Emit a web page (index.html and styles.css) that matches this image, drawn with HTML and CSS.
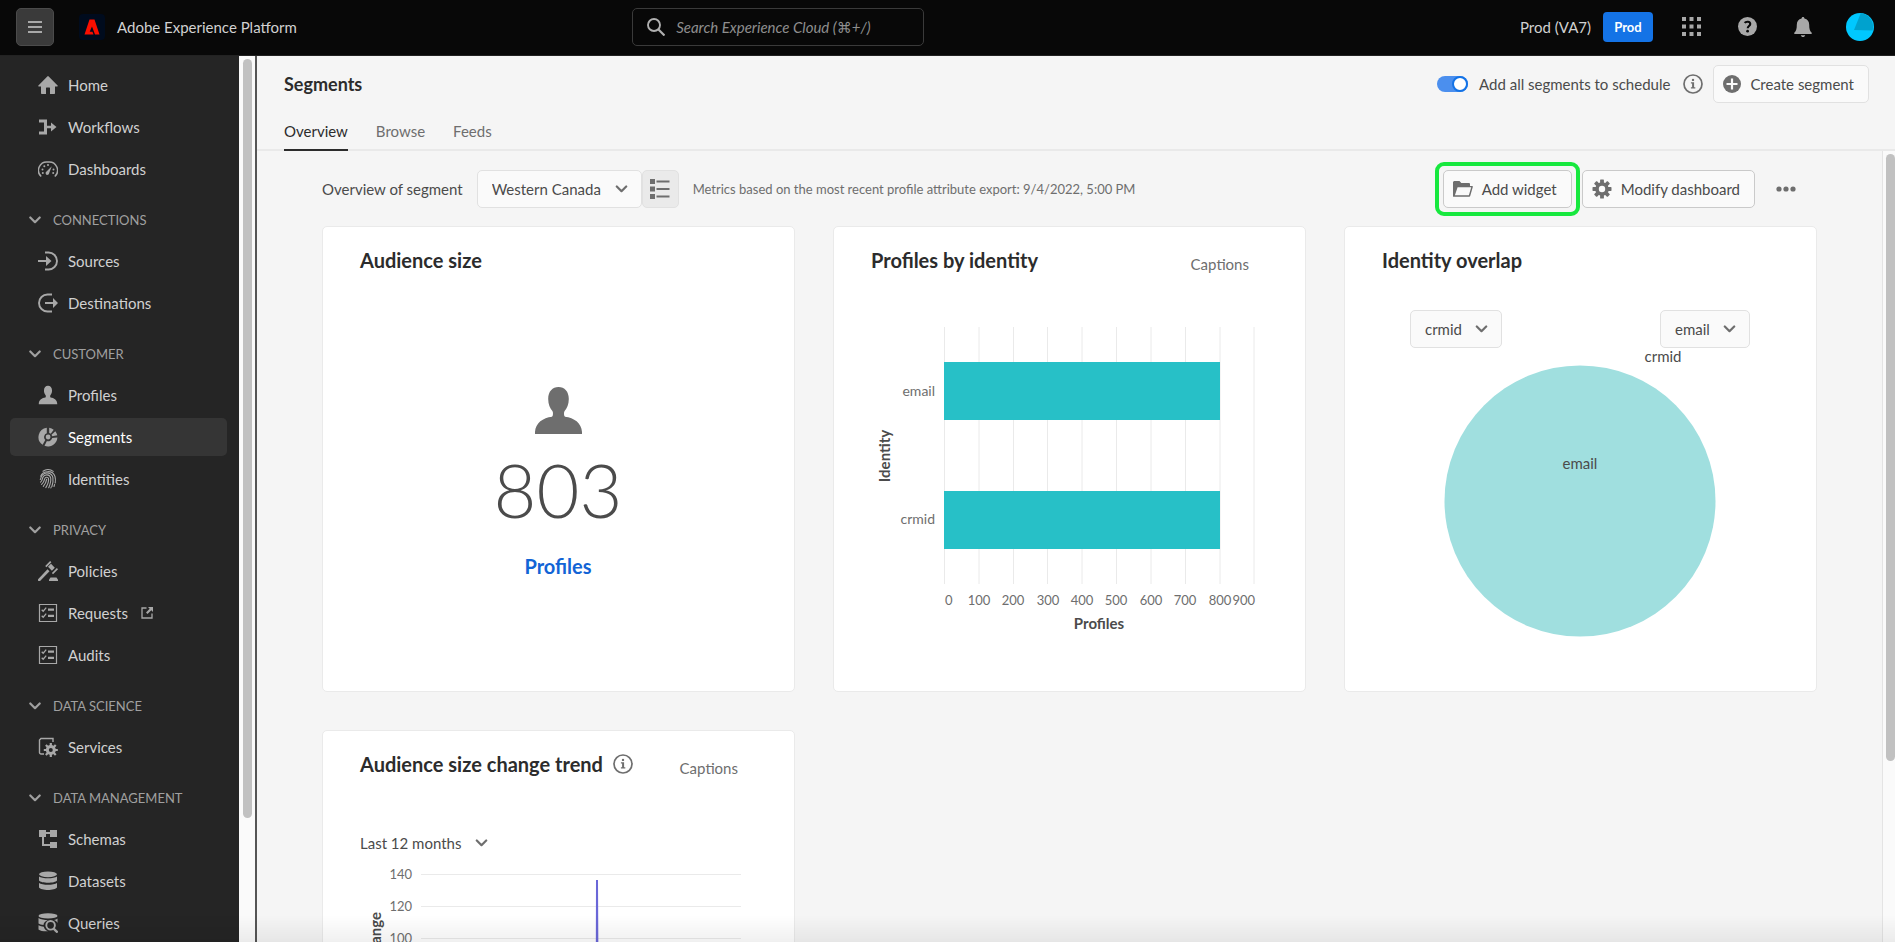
FILE: index.html
```html
<!DOCTYPE html>
<html lang="en">
<head>
<meta charset="utf-8">
<title>Segments - Adobe Experience Platform</title>
<meta name="viewport" content="width=device-width, initial-scale=1">
<link rel="stylesheet" href="styles.css">
</head>
<body>
<svg class="sprite" aria-hidden="true">
  <symbol id="i-chevron" viewBox="0 0 12 8"><path d="M1.300 1.500 6 6.200l4.700-4.700" fill="none" stroke="currentColor" stroke-width="2.200" stroke-linecap="round" stroke-linejoin="round"/></symbol>
  <symbol id="i-home" viewBox="0 0 20 18"><path d="M19.600 9.500 10.700.4a1 1 0 0 0-1.400 0L.4 9.500c-.4.4-.2.900.3.900H3v6.900c0 .4.300.7.700.7H8v-6c0-.3.2-.5.500-.5h3c.3 0 .5.200.5.500v6h4.300c.4 0 .7-.3.700-.7v-6.900h2.300c.5 0 .7-.5.300-.9z"/></symbol>
  <symbol id="i-flow" viewBox="0 0 20 18"><path d="M1 1.500h8v6.300h4V4.600L18.500 9 13 13.400v-3.200H9v6.300H1v-3h5v-9H1z"/></symbol>
  <symbol id="i-gauge" viewBox="0 0 20 18"><path d="M3.200 16.500A8.400 8.400 0 0 1 10 2a8.400 8.400 0 0 1 6.800 14.500" fill="none" stroke="currentColor" stroke-width="1.500"/><path d="M13.800 6.300 11.200 13a1.800 1.800 0 1 1-2.700-1.500z"/><circle cx="10" cy="4.900" r="1"/><circle cx="6.300" cy="6.300" r="1"/><circle cx="4.500" cy="9.600" r="1"/><circle cx="15.500" cy="9.600" r="1"/><circle cx="4.800" cy="13" r="1"/><circle cx="15.200" cy="13" r="1"/></symbol>
  <symbol id="i-source" viewBox="0 0 20 20"><path d="M7 1.500h3.500a8.500 8.500 0 0 1 0 17H7" fill="none" stroke="currentColor" stroke-width="1.900"/><path d="M0 9h8V5l5.500 5L8 15v-4H0z"/></symbol>
  <symbol id="i-dest" viewBox="0 0 20 20"><path d="M14 1.500H9.500a8.500 8.500 0 0 0 0 17H14" fill="none" stroke="currentColor" stroke-width="1.900"/><path d="M7 9h8V5l5 5-5 5v-4H7z"/></symbol>
  <symbol id="i-user" viewBox="-2 -2 51 51"><path d="M23.500 0c6 0 10.300 4.400 10.300 12 0 5.500-1.800 9.200-4.200 12-.9 1.200-.8 4.800.4 5.800C39 30.800 46.500 36 47 45v2H0v-2c.5-9 8-14.200 17-15.200 1.200-1 1.300-4.600.4-5.800-2.400-2.800-4.200-6.500-4.200-12C13.200 4.400 17.500 0 23.500 0z"/></symbol>
  <symbol id="i-segments" viewBox="0 0 20 20"><path d="M8.800.7v5.500A4.100 4.100 0 0 0 7.300 13L4.600 17.800A9.400 9.400 0 0 1 8.800.7zM11.200.7a9.400 9.400 0 0 1 4.500 2l-3 4a4.200 4.200 0 0 0-1.500-.6zM17.300 4.300a9.400 9.400 0 0 1 2 4l-5.100.9a4 4 0 0 0-.7-1.500zM19.400 10.600A9.400 9.400 0 0 1 6.500 18.800l2.400-4.800a4.200 4.200 0 0 0 5.300-3z"/><circle cx="10.100" cy="10" r="2.400"/></symbol>
  <symbol id="i-finger" viewBox="0 0 20 20"><g fill="none" stroke="currentColor" stroke-width="1.100" stroke-linecap="round"><path d="M5 2.200a9 9 0 0 1 10.200.2"/><path d="M2.700 7.300C4.800 1.400 14.800.8 17 7.500c.6 2 .5 4.500.2 6.500"/><path d="M2.300 10.500c.6-1 .7-3 2-4.300C8 2 14 4 14.900 8.600c.5 3-.1 6-1 8.900"/><path d="M2.500 13.200c1.700-1.400 1.800-3.400 2.400-4.900 1.500-3.600 7-3.200 7.800.8.500 3.200-.6 6.500-2 9.700"/><path d="M3.600 15.400c2.300-2 2.800-4 3.300-6 .5-1.700 3.200-1.600 3.600.3.500 3-1.100 6.300-2.700 8.900"/><path d="M5.300 17.400c2-2.300 3-4.500 3.400-7.200"/><path d="M12.900 18.900l.4-1M16 17.500l.6-2"/></g></symbol>
  <symbol id="i-gavel" viewBox="0 0 20 20"><path d="M.3 18 9.500 8.300l2 2L2.300 19.800a1.300 1.300 0 0 1-2-1.800zM10 5.700l3-2.900 3.800 4-2.900 2.900zM7.200 5l4.900-4.900 1.300 1.100-5 5zM13.900 12l5-4.900 1.100 1.200-5 5zM12.500 16.500h6l1.500 2.300V20h-9v-1.200z"/></symbol>
  <symbol id="i-list" viewBox="0 0 20 20"><path d="M1.500 1.500h17v17h-17z" fill="none" stroke="currentColor" stroke-width="1.200"/><path d="m3.700 6.700 1.500 1.500 3-3.500M3.700 12.700l1.500 1.500 3-3.500" fill="none" stroke="currentColor" stroke-width="1.300"/><path d="M10 5.500h6v2.200h-6zM10 11.700h6v2.200h-6z"/></symbol>
  <symbol id="i-external" viewBox="0 0 12 12"><path d="M5.500 1H1v10h10V6.500" fill="none" stroke="currentColor" stroke-width="1.300"/><path d="M7 0h5v5l-1.700-1.700L6.500 7 5 5.500l3.700-3.800z"/></symbol>
  <symbol id="i-gear" viewBox="-10 -10 20 20"><g><rect x="-1.900" y="-9.500" width="3.800" height="19" rx=".6"/><rect x="-1.900" y="-9.500" width="3.800" height="19" rx=".6" transform="rotate(45)"/><rect x="-1.900" y="-9.500" width="3.800" height="19" rx=".6" transform="rotate(90)"/><rect x="-1.900" y="-9.500" width="3.800" height="19" rx=".6" transform="rotate(135)"/></g><circle r="6.800"/><circle class="gear-hole" r="3.200"/></symbol>
  <symbol id="i-service" viewBox="0 0 20 20"><path d="M6 17H3a1.500 1.500 0 0 1-1.500-1.500V3L3 1.500h12V5" fill="none" stroke="currentColor" stroke-width="1.400"/><g transform="translate(12.800 13)"><path d="M-1.100-7h2.200V7h-2.200zM-7-1.100H7v2.200H-7z"/><path d="M-1.100-7h2.200V7h-2.200zM-7-1.100H7v2.200H-7z" transform="rotate(45)"/><circle r="5"/><circle class="gear-hole" r="2"/></g></symbol>
  <symbol id="i-schema" viewBox="0 0 20 20"><path d="M1 1h7v2h4V1h7v7h-7V5H8v3H6v7h6v-2h7v6h-7v-2H4V8H1z"/></symbol>
  <symbol id="i-data" viewBox="0 0 20 20"><ellipse cx="10" cy="3.300" rx="9" ry="2.900"/><path d="M1 5.500c3 2.400 15 2.400 18 0v4c-2 3-16 3-18 0zM1 12c3 2.400 15 2.400 18 0v4.500c-2 3.300-16 3.300-18 0z"/></symbol>
  <symbol id="i-query" viewBox="0 0 20 20"><ellipse cx="10" cy="2.900" rx="9.500" ry="2.600"/><path d="M.5 5c2 1.500 6 2 9.500 2-3 1-4.500 3-4.500 5-2-.2-4-.7-5-1.500zM16 7c1.500-.4 2.700-.9 3.500-1.600V10c-.6-1.500-1.700-2.400-3.500-3zM.5 12.300c1.500.9 3.500 1.300 5.300 1.400.5 2 2 3.800 4.200 4.600-4 .2-8-.4-9.500-1.800z"/><circle cx="12.600" cy="12.300" r="4.300" fill="none" stroke="currentColor" stroke-width="1.900"/><path d="m15.600 15.600 4 4" stroke="currentColor" stroke-width="2.300"/></symbol>
  <symbol id="i-info" viewBox="0 0 20 20"><circle cx="10" cy="10" r="9" fill="none" stroke="currentColor" stroke-width="1.700"/><circle cx="10" cy="5.900" r="1.200"/><path d="M7.900 8.300h3.200v4.900h1.200v1.300H7.900v-1.300h1.200V9.600H7.900z"/></symbol>
</svg>

<header class="topbar">
  <button class="menu-btn" aria-label="Menu"><svg viewBox="0 0 14 14" width="14" height="14"><path d="M0 2h14M0 7h14M0 12h14" stroke="currentColor" stroke-width="2"/></svg></button>
  <a class="brand" href="#">
    <svg class="logo" viewBox="0 0 26 26" aria-hidden="true"><rect width="26" height="26" rx="4" fill="#000b1d"/><path d="M10.500 5.500h5L20.500 20.500H16l-3-8-2.300 5.300h2.800l1 2.700H5.500z" fill="#fa0f00"/></svg>
    <span>Adobe Experience Platform</span>
  </a>
  <label class="search">
    <svg viewBox="0 0 18 18" width="18" height="18" aria-hidden="true"><circle cx="7" cy="7" r="6" fill="none" stroke="currentColor" stroke-width="1.900"/><path d="m11.500 11.500 6 6" stroke="currentColor" stroke-width="2.200"/></svg>
    <input type="search" placeholder="Search Experience Cloud (⌘+/)" aria-label="Search Experience Cloud">
  </label>
  <div class="top-actions">
    <span class="org">Prod (VA7)</span>
    <button class="env">Prod</button>
    <button class="top-icon" aria-label="Apps"><svg viewBox="0 0 19 19" width="19" height="19"><path d="M0 0h4v4H0zM7.500 0h4v4h-4zM15 0h4v4h-4zM0 7.500h4v4H0zM7.500 7.500h4v4h-4zM15 7.500h4v4h-4zM0 15h4v4H0zM7.500 15h4v4h-4zM15 15h4v4h-4z"/></svg></button>
    <button class="top-icon" aria-label="Help"><svg viewBox="0 0 18 18" width="19" height="19"><circle cx="9" cy="9" r="9"/><path d="M6.300 5.600C7.500 4 11.600 3.900 11.600 6.600c0 1.900-2.400 2-2.400 4" fill="none" stroke="#080808" stroke-width="2"/><circle cx="9.100" cy="13.400" r="1.300" fill="#080808"/></svg></button>
    <button class="top-icon" aria-label="Notifications"><svg viewBox="0 0 18 20" width="18" height="20"><path d="M9 0c.9 0 1.400.6 1.400 1.500 3.200.7 4.800 3 4.800 6.200 0 4.200.6 6.200 2.300 7.800.8.700.4 1.500-.5 1.500H1c-.9 0-1.300-.8-.5-1.500 1.700-1.600 2.300-3.600 2.300-7.800 0-3.200 1.600-5.500 4.800-6.200C7.600.6 8.100 0 9 0zM6.800 18.200h4.400c-.4 2.400-4 2.400-4.400 0z"/></svg></button>
    <button class="avatar" aria-label="Account"><svg viewBox="0 0 28 28" width="28" height="28"><circle cx="14" cy="14" r="14" fill="#00c8ff"/><path d="M14.800 0A14 14 0 0 1 26.600 17.500L8 17z" fill="#00a2ce"/></svg></button>
  </div>
</header>

<div class="shell">
  <nav class="sidebar" aria-label="Main">
    <a class="item" href="#"><svg><use href="#i-home"/></svg>Home</a>
    <a class="item" href="#"><svg><use href="#i-flow"/></svg>Workflows</a>
    <a class="item" href="#"><svg><use href="#i-gauge"/></svg>Dashboards</a>
    <button class="group"><svg><use href="#i-chevron"/></svg>CONNECTIONS</button>
    <a class="item" href="#"><svg><use href="#i-source"/></svg>Sources</a>
    <a class="item" href="#"><svg><use href="#i-dest"/></svg>Destinations</a>
    <button class="group"><svg><use href="#i-chevron"/></svg>CUSTOMER</button>
    <a class="item" href="#"><svg><use href="#i-user"/></svg>Profiles</a>
    <a class="item current" href="#" aria-current="page"><svg><use href="#i-segments"/></svg>Segments</a>
    <a class="item" href="#"><svg><use href="#i-finger"/></svg>Identities</a>
    <button class="group"><svg><use href="#i-chevron"/></svg>PRIVACY</button>
    <a class="item" href="#"><svg><use href="#i-gavel"/></svg>Policies</a>
    <a class="item" href="#"><svg><use href="#i-list"/></svg>Requests<svg class="external"><use href="#i-external"/></svg></a>
    <a class="item" href="#"><svg><use href="#i-list"/></svg>Audits</a>
    <button class="group"><svg><use href="#i-chevron"/></svg>DATA SCIENCE</button>
    <a class="item" href="#"><svg><use href="#i-service"/></svg>Services</a>
    <button class="group"><svg><use href="#i-chevron"/></svg>DATA MANAGEMENT</button>
    <a class="item" href="#"><svg><use href="#i-schema"/></svg>Schemas</a>
    <a class="item" href="#"><svg><use href="#i-data"/></svg>Datasets</a>
    <a class="item" href="#"><svg><use href="#i-query"/></svg>Queries</a>
  </nav>
  <div class="track side-track"><div class="thumb"></div></div>

  <main class="main">
    <div class="page-head">
      <div class="title-row">
        <h1>Segments</h1>
        <label class="switch"><input type="checkbox" role="switch" checked>Add all segments to schedule</label>
        <svg class="info"><use href="#i-info"/></svg>
        <button class="btn create"><svg viewBox="0 0 18 18" width="18" height="18"><circle cx="9" cy="9" r="9"/><path d="M9 3.500v11M3.500 9h11" stroke="#fafafa" stroke-width="2.200"/></svg>Create segment</button>
      </div>
      <div class="tabs" role="tablist">
        <button class="tab active" role="tab" aria-selected="true">Overview</button>
        <button class="tab" role="tab">Browse</button>
        <button class="tab" role="tab">Feeds</button>
      </div>
    </div>

    <div class="body">
      <div class="content">
        <div class="toolbar">
          <label for="segment">Overview of segment</label>
          <span class="picker"><select id="segment"><option>Western Canada</option></select><svg><use href="#i-chevron"/></svg></span>
          <button class="list-btn" aria-label="Choose segment"><svg viewBox="0 0 20 20" width="20" height="20"><path d="M0 0h5v5H0zM0 7.500h5v5H0zM0 15h5v5H0zM6.500 1.500h13v2h-13zM6.500 9h13v2h-13zM6.500 16.500h13v2h-13z"/></svg></button>
          <span class="note">Metrics based on the most recent profile attribute export: 9/4/2022, 5:00 PM</span>
          <button class="btn strong marked"><svg viewBox="0 0 20 16" width="20" height="16"><path d="M0 15.200V1l1-1h5.500L8.300 2H16q1 0 1 1v2h2.200q.9 0 .6.900L17.200 15q-.2.700-1 .7H.5q-.5 0-.5-.5zM4.600 6.300 1.900 14.300h14L18.200 6.300z" fill-rule="evenodd"/></svg>Add widget</button>
          <button class="btn strong"><svg class="gear"><use href="#i-gear"/></svg>Modify dashboard</button>
          <button class="more" aria-label="More"><svg viewBox="0 0 20 6" width="20" height="6"><circle cx="3" cy="3" r="2.600"/><circle cx="10" cy="3" r="2.600"/><circle cx="17" cy="3" r="2.600"/></svg></button>
        </div>

        <div class="cards">
          <section class="card">
            <div class="card-head"><h2>Audience size</h2></div>
            <div class="metric">
              <svg class="person"><use href="#i-user"/></svg>
              <span class="number">803</span>
              <a href="#">Profiles</a>
            </div>
          </section>

          <section class="card">
            <div class="card-head"><h2>Profiles by identity</h2><button class="captions">Captions</button></div>
            <svg class="bars" viewBox="0 0 395 320" role="img" aria-label="Profiles by identity">
              <path class="grid" d="M73.500 0v257M108 0v257M142.500 0v257M176.500 0v257M211 0v257M245.500 0v257M280 0v257M314.500 0v257M349 0v257M383 0v257"/>
              <path fill="#27c0c7" d="M73 35h276v58H73zM73 164h276v58H73z"/>
              <g class="label" text-anchor="end"><text x="64" y="69">email</text><text x="64" y="197">crmid</text></g>
              <g class="tick">
                <text x="74" y="278">0</text>
                <g text-anchor="middle"><text x="108" y="278">100</text><text x="142" y="278">200</text><text x="177" y="278">300</text><text x="211" y="278">400</text><text x="245" y="278">500</text><text x="280" y="278">600</text><text x="314" y="278">700</text><text x="349" y="278">800</text></g>
                <text x="384" y="278" text-anchor="end">900</text>
              </g>
              <g class="axis" text-anchor="middle"><text x="228" y="302">Profiles</text><text transform="translate(19 129) rotate(-90)">Identity</text></g>
            </svg>
          </section>

          <section class="card">
            <div class="card-head"><h2>Identity overlap</h2></div>
            <div class="overlap-pickers">
              <span class="picker"><select aria-label="First identity"><option>crmid</option></select><svg><use href="#i-chevron"/></svg></span>
              <span class="picker"><select aria-label="Second identity"><option>email</option></select><svg><use href="#i-chevron"/></svg></span>
            </div>
            <svg class="venn" viewBox="0 0 272 290" role="img" aria-label="Identity overlap">
              <circle cx="136" cy="153" r="135.500" fill="#a0dfdf"/>
              <g class="venn-label" text-anchor="middle"><text x="219" y="14">crmid</text><text x="136" y="121">email</text></g>
            </svg>
          </section>

          <section class="card">
            <div class="card-head"><h2>Audience size change trend</h2><svg class="info"><use href="#i-info"/></svg><button class="captions">Captions</button></div>
            <div class="range"><span class="picker quiet"><select aria-label="Range"><option>Last 12 months</option></select><svg><use href="#i-chevron"/></svg></span></div>
            <svg class="trend" viewBox="0 0 395 260" role="img" aria-label="Audience size change trend">
              <path class="grid" d="M61 9.500h320M61 41.500h320M61 73.500h320M61 105.500h320M61 137.500h320M61 169.500h320M61 201.500h320"/>
              <path d="M236.500 201 237 15l1 186z" fill="none" stroke="#6a67d8" stroke-width="2" stroke-linejoin="bevel"/>
              <g class="tick" text-anchor="end"><text x="52" y="14">140</text><text x="52" y="46">120</text><text x="52" y="78">100</text><text x="52" y="110">80</text></g>
              <g class="axis" text-anchor="end"><text transform="translate(21 47) rotate(-90)">Change</text></g>
            </svg>
          </section>
        </div>
      </div>
      <div class="track body-track"><div class="thumb"></div></div>
    </div>
  </main>
</div>
<div class="fade"></div>
</body>
</html>
```
FILE: styles.css
```css
*, *::after { box-sizing: border-box; }

body {
  margin: 0;
  height: 100vh;
  display: flex;
  flex-direction: column;
  overflow: hidden;
  font: 15px/20px Lato, "Noto Sans", "DejaVu Sans", sans-serif;
  color: #4b4b4b;
  background: #f5f5f5;
  --hole: #252525;
}

svg { fill: currentColor; flex: none; display: block; }
button, input, select { font: inherit; color: inherit; margin: 0; }
button { border: 0; background: none; padding: 0; cursor: pointer; }
a { color: inherit; text-decoration: none; }
h1, h2 { margin: 0; color: #2c2c2c; font-weight: 700; }
.sprite { position: absolute; width: 0; height: 0; }

/* Top bar */
.topbar {
  display: grid;
  grid-template-columns: 38px 14fr 292px 23fr;
  align-items: center;
  height: 56px;
  padding: 0 21px 2px 16px;
  flex: none;
  background: #080808;
  border-bottom: 1px solid #222;
  color: #d1d1d1;
}
.menu-btn {
  width: 38px;
  height: 38px;
  display: grid;
  place-items: center;
  border: 1px solid #4b4b4b;
  border-radius: 5px;
  background: #3a3a3a;
  color: #a8a8a8;
}
.brand { display: flex; align-items: center; gap: 12px; margin-left: 25px; }
.logo { width: 26px; height: 26px; }
.search {
  display: flex;
  align-items: center;
  gap: 11px;
  height: 38px;
  padding: 0 14px;
  border: 1px solid #3a3a3a;
  border-radius: 5px;
  color: #b0b0b0;
}
.search input {
  flex: 1;
  min-width: 0;
  border: 0;
  padding: 0;
  background: none;
  outline: 0;
  font-style: italic;
}
.search input::placeholder { color: #8e8e8e; opacity: 1; }
.top-actions { display: flex; align-items: center; justify-content: flex-end; color: #a8a8a8; }
.org { color: #d1d1d1; margin-right: 12px; }
.env {
  width: 50px;
  height: 30px;
  margin-right: 19px;
  border-radius: 4px;
  background: #1473e6;
  color: #fff;
  font-size: 13px;
  font-weight: 700;
}
.top-icon { width: 38px; height: 38px; display: grid; place-items: center; margin-right: 18px; }
.avatar { margin-left: 6px; }

/* Shell and sidebar */
.shell { flex: 1; min-height: 0; display: flex; }
.sidebar {
  width: 239px;
  flex: none;
  padding: 10px 12px 0 10px;
  overflow: hidden;
  background: #252525;
  color: #d1d1d1;
}
.item {
  display: flex;
  align-items: center;
  height: 38px;
  margin-bottom: 4px;
  padding-left: 28px;
  gap: 10px;
  border-radius: 5px;
}
.item svg { width: 20px; height: 20px; color: #a8a8a8; }
.item .external { width: 12px; height: 12px; margin-left: 3px; }
.item.current { background: #353535; color: #fff; }
.gear-hole { fill: var(--hole); }
.group {
  display: flex;
  align-items: center;
  gap: 12px;
  width: 100%;
  height: 50px;
  padding: 5px 0 0 19px;
  color: #a0a0a0;
  font-size: 13px;
}
.group svg { width: 12px; height: 8px; }

.track { flex: none; background: #fafafa; }
.thumb { border-radius: 5px; background: #c1c1c1; }
.side-track { width: 16px; padding: 3px 3px 0 4px; }
.side-track .thumb { height: 86%; }

/* Page header */
.main {
  flex: 1;
  min-width: 0;
  display: flex;
  flex-direction: column;
  border-left: 2px solid #555;
}
.page-head { padding: 9px 26px 0 27px; border-bottom: 2px solid #e9e9e9; }
.title-row { display: flex; align-items: center; height: 38px; }
.title-row h1 { flex: 1; font-size: 18px; line-height: 20px; }
.switch { display: flex; align-items: center; gap: 11px; }
.switch input {
  appearance: none;
  display: block;
  width: 31px;
  height: 16px;
  border-radius: 8px;
  background: #4b8fee;
}
.switch input::after {
  content: "";
  display: block;
  width: 16px;
  height: 16px;
  margin-left: 15px;
  border: 2px solid #1473e6;
  border-radius: 50%;
  background: #fff;
}
.info { width: 20px; height: 20px; color: #6e6e6e; }
.title-row .info { margin: 0 10px 0 13px; }
.btn {
  display: flex;
  align-items: center;
  gap: 9px;
  height: 38px;
  padding: 0 14px 0 9px;
  border: 1px solid #e1e1e1;
  border-radius: 5px;
  background: #fafafa;
  --hole: #fafafa;
}
.btn svg { color: #6e6e6e; }
.btn.strong { border-color: #cacaca; }
.tabs { display: flex; gap: 28px; margin: 6px 0 -2px; height: 42px; }
.tab { padding-top: 4px; color: #6e6e6e; border-bottom: 2px solid transparent; }
.tab.active { color: #2c2c2c; border-color: #2c2c2c; }

/* Content */
.body { flex: 1; min-height: 0; display: flex; }
.content { flex: 1; min-width: 0; padding: 19px 65px 0; overflow: hidden; }
.body-track { width: 13px; padding: 3px 0 0 3px; border-left: 1px solid #e4e4e4; }
.body-track .thumb { height: 77%; }
.toolbar { display: flex; align-items: center; padding-right: 12px; margin-bottom: 18px; }
.picker { position: relative; display: inline-flex; align-items: center; }
.picker select {
  appearance: none;
  height: 38px;
  padding: 0 39px 0 14px;
  border: 1px solid #e1e1e1;
  border-radius: 5px;
  background: #fafafa;
}
.picker svg { position: absolute; right: 14px; width: 13px; height: 8px; color: #6e6e6e; pointer-events: none; }
.toolbar .picker { margin-left: 14px; }
.list-btn {
  width: 37px;
  height: 38px;
  margin-right: 14px;
  display: grid;
  place-items: center;
  border: 1px solid #e1e1e1;
  border-radius: 5px;
  background: #eaeaea;
  color: #6e6e6e;
}
.note { flex: 1; color: #6e6e6e; font-size: 13px; }
.marked { position: relative; margin-right: 10px; }
.marked::after {
  content: "";
  position: absolute;
  inset: -9px;
  border: 4px solid #17e83e;
  border-radius: 9px;
}
.gear { width: 20px; height: 20px; }
.more { width: 38px; height: 38px; margin-left: 12px; display: grid; place-items: center; color: #6e6e6e; }

.cards {
  display: grid;
  grid-template-columns: repeat(3, minmax(0, 1fr));
  grid-auto-rows: 466px;
  gap: 38px;
}
.card {
  display: flex;
  flex-direction: column;
  padding: 19px 38px 19px 37px;
  border: 1px solid #eaeaea;
  border-radius: 5px;
  background: #fff;
}
.card-head { display: flex; align-items: center; height: 28px; }
.card-head h2 { font-size: 20px; line-height: 28px; }
.card-head .info { margin-left: 10px; }
.captions { margin: 8px 18px 0 auto; color: #6e6e6e; }
.metric { display: flex; flex-direction: column; align-items: center; padding-top: 111px; }
.person { width: 51px; height: 51px; color: #6e6e6e; }
.number { margin-top: 14px; font-size: 74px; line-height: 80px; font-weight: 300; }
.metric a { margin-top: 24px; font-size: 20px; line-height: 24px; font-weight: 700; color: #1264d6; }

.bars, .trend { width: 395px; max-width: 100%; }
.bars { margin-top: 53px; }
.grid { fill: none; stroke: #eaeaea; stroke-width: 1; }
.tick { font-size: 13px; fill: #6e6e6e; }
.label { font-size: 14px; fill: #6e6e6e; }
.axis { font-size: 15px; font-weight: 700; fill: #4b4b4b; }

.overlap-pickers { display: flex; justify-content: space-between; padding: 36px 28px 0; }
.venn { width: 272px; max-width: 100%; align-self: center; overflow: visible; }
.venn-label { font-size: 15px; fill: #4b4b4b; }

.range { margin-top: 46px; }
.quiet select { padding: 0 26px 0 0; border: 0; background: none; }
.quiet svg { right: 0; }
.trend { margin-top: 3px; }

.fade {
  position: fixed;
  inset: auto 0 0;
  height: 27px;
  background: linear-gradient(transparent, rgba(0, 0, 0, .06));
  pointer-events: none;
}
```
